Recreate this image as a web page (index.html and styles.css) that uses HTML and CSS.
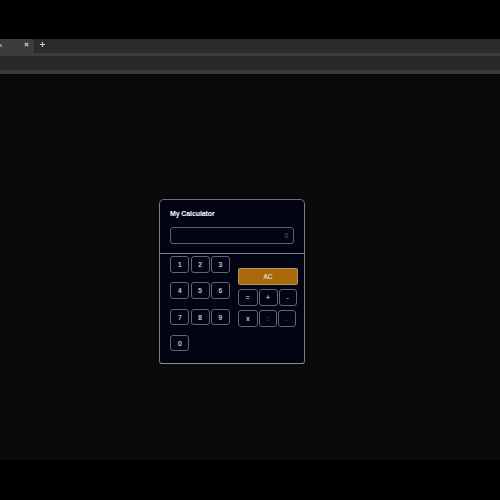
FILE: index.html
```html
<!DOCTYPE html>
<html lang="en">
<head>
<meta charset="utf-8">
<title>My Calculator</title>
<link rel="stylesheet" href="styles.css">
</head>
<body>
<header class="tabs">
  <div class="tab">
    <span class="tab-name">s</span>
    <svg class="close" viewBox="0 0 5 5"><path d="M.8.8l3.4 3.4M4.2.8L.8 4.2"/></svg>
  </div>
  <svg class="new-tab" viewBox="0 0 5 5"><path d="M2.5 0v5M0 2.5h5"/></svg>
</header>
<div class="toolbar"></div>
<main class="page">
  <section class="calculator">
    <div class="head">
      <h1>My Calculator</h1>
      <div class="display">0</div>
    </div>
    <div class="keys">
      <div class="digits">
        <button>1</button><button>2</button><button>3</button>
        <button>4</button><button>5</button><button>6</button>
        <button>7</button><button>8</button><button>9</button>
        <button>0</button>
      </div>
      <div class="operators">
        <button class="clear">AC</button>
        <div class="row"><button class="wide">=</button><button>+</button><button class="small">-</button></div>
        <div class="row"><button class="wide">x</button><button class="small dim">:</button><button class="small dim">.</button></div>
      </div>
    </div>
  </section>
</main>
</body>
</html>
```
FILE: styles.css
```css
* { box-sizing: border-box; }
body {
  margin: 0;
  height: 500px;
  padding: 39px 0 40px;
  display: flex;
  flex-direction: column;
  overflow: hidden;
  background: #000;
  font-family: "Liberation Sans", Arial, sans-serif;
  color: #e4e7ee;
}
.tabs {
  flex: none;
  height: 14px;
  display: flex;
  align-items: flex-start;
  background: #2b2b2b;
}
.tab {
  width: 34px;
  height: 14px;
  padding: 3px 5px 0 0;
  display: flex;
  justify-content: space-between;
  background: #3c3c3c;
  border-top-right-radius: 3px;
}
.tab-name { margin-left: -1px; font-size: 6px; line-height: 6px; color: #ccc; }
.close, .new-tab { width: 5px; height: 5px; fill: none; stroke: #d0d0d0; stroke-width: 1.1; }
.new-tab { margin: 3px 0 0 6px; }
.toolbar {
  flex: none;
  height: 21px;
  background: #282828;
  border-top: 3px solid #3a3a3a;
  border-bottom: 4px solid #3a3a3a;
}
.page {
  flex: 1;
  padding-top: 125px;
  padding-left: 159px;
  background: #0a0a0a;
}
.calculator {
  width: 145.5px;
  height: 165px;
  background: #020414;
  border: 1px solid #6b6e78;
  border-color: #6b6e78 #7b7e88 #8b8e98;
  border-radius: 5px 5px 3px 3px;
  overflow: hidden;
}
.head { height: 53px; padding: 9px 10px 0; }
h1 { margin: 0; font-size: 7px; line-height: 10px; letter-spacing: -.1px; color: #fff; }
.display {
  width: 124px;
  height: 17px;
  margin-top: 8px;
  padding-right: 5px;
  border: 1px solid #5c5f68;
  border-radius: 3px;
  font-size: 6.5px;
  line-height: 15px;
  text-align: right;
  color: #62656d;
}
.keys {
  height: 110px;
  padding: 2px 5.5px 0 10.4px;
  display: flex;
  justify-content: space-between;
  border-top: 1px solid #7b7e88;
}
.digits {
  display: grid;
  grid-template-columns: repeat(3, 19px);
  grid-auto-rows: 16.5px;
  gap: 9.8px 1.25px;
}
.operators {
  width: 60px;
  padding-top: 12px;
  display: flex;
  flex-direction: column;
  gap: 4.5px;
}
.row { display: flex; gap: 1px; }
button {
  width: 19px;
  height: 16.5px;
  padding: 1px 0 0;
  background: #020414;
  border: 1px solid #62656e;
  border-radius: 3px;
  color: inherit;
  font: 6.5px/14px "Liberation Sans", Arial, sans-serif;
  -webkit-text-stroke: .1px;
}
.wide { width: 19.5px; }
.small { width: 18px; }
.dim { color: #8c8f99; }
.clear { width: 60px; background: #a9690b; border-color: #b19166; border-radius: 1.5px; }
```
